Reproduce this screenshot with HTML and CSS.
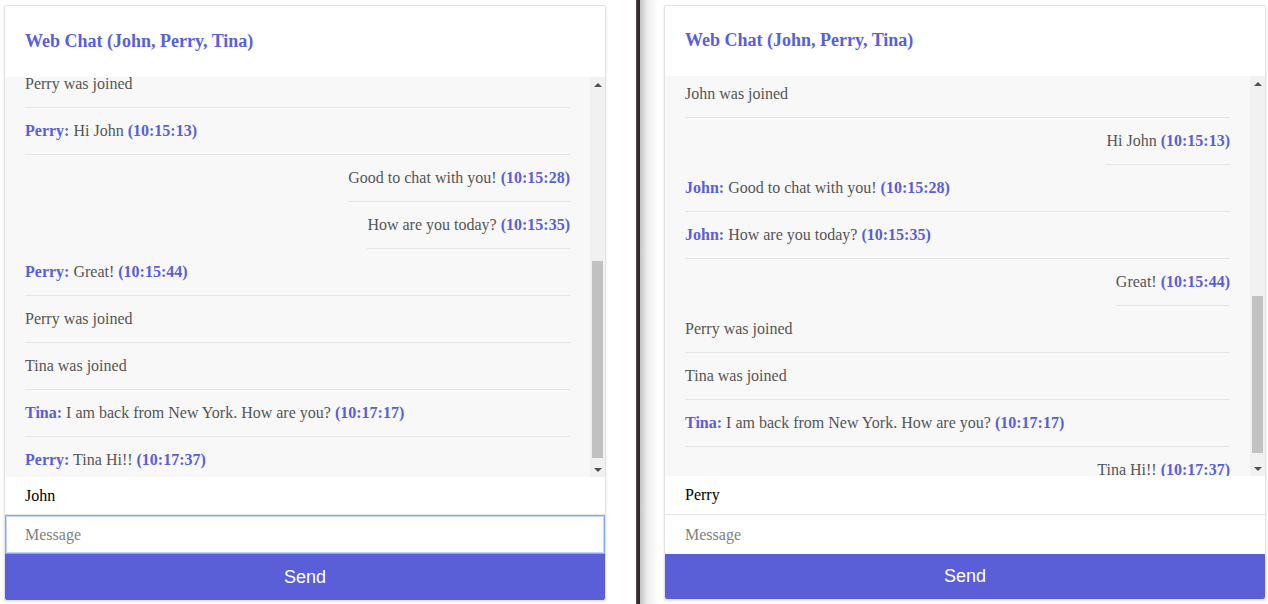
FILE: index.html
```html
<!DOCTYPE html>
<html lang="en">
<head>
    <meta charset="UTF-8">
    <meta name="viewport" content="width=device-width, initial-scale=1.0">
    <title>Web Chat</title>
    <link rel="stylesheet" href="styles.css">
</head>
<body>
    <div class="screen">
        <div class="pane">
            <div class="chat">
                <header class="chat-header">
                    <h1>Web Chat (John, Perry, Tina)</h1>
                </header>
                <div class="history">
                    <ul class="messages" data-scroll="345">
                        <li class="msg">John was joined</li>
                        <li class="msg">Perry was joined</li>
                        <li class="msg"><b class="who">Perry:</b> Hello? <b class="time">(10:12:41)</b></li>
                        <li class="msg own">Hi Perry <b class="time">(10:12:58)</b></li>
                        <li class="msg">Tina was joined</li>
                        <li class="msg">John was joined</li>
                        <li class="msg">John was joined</li>
                        <li class="msg">Perry was joined</li>
                        <li class="msg"><b class="who">Perry:</b> Hi John <b class="time">(10:15:13)</b></li>
                        <li class="msg own">Good to chat with you! <b class="time">(10:15:28)</b></li>
                        <li class="msg own">How are you today? <b class="time">(10:15:35)</b></li>
                        <li class="msg"><b class="who">Perry:</b> Great! <b class="time">(10:15:44)</b></li>
                        <li class="msg">Perry was joined</li>
                        <li class="msg">Tina was joined</li>
                        <li class="msg"><b class="who">Tina:</b> I am back from New York. How are you? <b class="time">(10:17:17)</b></li>
                        <li class="msg"><b class="who">Perry:</b> Tina Hi!! <b class="time">(10:17:37)</b></li>
                    </ul>
                    <div class="scrollbar">
                        <span class="arrow up"></span>
                        <div class="track">
                            <div class="thumb" style="margin-top: 169px; height: 197px;"></div>
                        </div>
                        <span class="arrow down"></span>
                    </div>
                </div>
                <input class="field name" type="text" value="John">
                <input class="field message focused" type="text" placeholder="Message">
                <button class="send">Send</button>
            </div>
        </div>
        <div class="divider"></div>
        <div class="pane pane-right">
            <div class="chat chat-right">
                <header class="chat-header">
                    <h1>Web Chat (John, Perry, Tina)</h1>
                </header>
                <div class="history">
                    <ul class="messages" data-scroll="522">
                        <li class="msg">Perry was joined</li>
                        <li class="msg">John was joined</li>
                        <li class="msg"><b class="who">John:</b> Anyone here? <b class="time">(10:11:02)</b></li>
                        <li class="msg">Perry was joined</li>
                        <li class="msg own">Hello? <b class="time">(10:12:41)</b></li>
                        <li class="msg"><b class="who">John:</b> Hi Perry <b class="time">(10:12:58)</b></li>
                        <li class="msg">Tina was joined</li>
                        <li class="msg">Perry was joined</li>
                        <li class="msg">John was joined</li>
                        <li class="msg">Perry was joined</li>
                        <li class="msg">Perry was joined</li>
                        <li class="msg">John was joined</li>
                        <li class="msg own">Hi John <b class="time">(10:15:13)</b></li>
                        <li class="msg"><b class="who">John:</b> Good to chat with you! <b class="time">(10:15:28)</b></li>
                        <li class="msg"><b class="who">John:</b> How are you today? <b class="time">(10:15:35)</b></li>
                        <li class="msg own">Great! <b class="time">(10:15:44)</b></li>
                        <li class="msg">Perry was joined</li>
                        <li class="msg">Tina was joined</li>
                        <li class="msg"><b class="who">Tina:</b> I am back from New York. How are you? <b class="time">(10:17:17)</b></li>
                        <li class="msg own">Tina Hi!! <b class="time">(10:17:37)</b></li>
                    </ul>
                    <div class="scrollbar">
                        <span class="arrow up"></span>
                        <div class="track">
                            <div class="thumb" style="margin-top: 205px; height: 157px;"></div>
                        </div>
                        <span class="arrow down"></span>
                    </div>
                </div>
                <input class="field name" type="text" value="Perry">
                <input class="field message" type="text" placeholder="Message">
                <button class="send">Send</button>
            </div>
        </div>
    </div>
    <script>
        document.querySelectorAll('.messages').forEach(function (list) {
            list.scrollTop = Number(list.dataset.scroll);
        });
    </script>
</body>
</html>
```

FILE: styles.css
```css
:root {
    --accent: #5a5fd7;
    --text: #555555;
    --line: #e6e6e6;
    --list-bg: #f8f8f8;
}
body {
    margin: 0;
    font-family: 'Liberation Serif', 'Times New Roman', serif;
    background: #ffffff;
}
.screen {
    display: flex;
    height: 604px;
    overflow: hidden;
}
.pane {
    width: 636px;
    padding: 5px 0 0 4px;
    box-sizing: border-box;
    background: #ffffff;
}
.pane-right {
    flex: 1;
    width: auto;
    padding-left: 24px;
    background: linear-gradient(to right, #c4c4c4 0, #ececec 7px, #ffffff 18px);
}
.divider {
    width: 4px;
    background: linear-gradient(to right, #6a6a6a 0, #2e2e2e 1px, #4d2a2e 2px, #2a2a2a 3px);
}
.chat {
    width: 602px;
    box-sizing: border-box;
    border: 1px solid #e2e2e2;
    border-radius: 2px;
    box-shadow: 0 1px 3px rgba(0, 0, 0, 0.1);
    background: #ffffff;
    display: flex;
    flex-direction: column;
}
.chat-header {
    box-sizing: border-box;
    height: 71px;
    display: flex;
    align-items: center;
    padding: 0 20px;
}
.chat-right .chat-header {
    height: 70px;
    padding-bottom: 2px;
}
.chat-header h1 {
    margin: 0;
    font-size: 18px;
    font-weight: bold;
    color: var(--accent);
}
.history {
    display: flex;
    height: 400px;
    background: var(--list-bg);
}
.messages {
    flex: 1;
    margin: 0;
    padding: 0 20px;
    list-style: none;
    overflow: hidden;
}
.msg {
    padding: 12px 0;
    line-height: 22px;
    font-size: 16px;
    color: var(--text);
    border-bottom: 1px solid var(--line);
    white-space: nowrap;
}
.msg.own {
    width: fit-content;
    margin-left: auto;
}
.who,
.time {
    color: var(--accent);
}
.scrollbar {
    width: 15px;
    display: flex;
    flex-direction: column;
    background: #f1f1f1;
}
.arrow {
    height: 15px;
    display: flex;
    align-items: center;
    justify-content: center;
}
.arrow::before {
    content: '';
    border-left: 4px solid transparent;
    border-right: 4px solid transparent;
}
.arrow.up::before {
    border-bottom: 4px solid #505050;
}
.arrow.down::before {
    border-top: 4px solid #505050;
}
.track {
    flex: 1;
    padding: 0 2px;
}
.thumb {
    background: #c1c1c1;
}
.field {
    display: block;
    width: 100%;
    box-sizing: border-box;
    height: 38px;
    margin: 0;
    padding: 0 20px;
    border: 0;
    border-bottom: 1px solid var(--line);
    font-family: 'Liberation Serif', 'Times New Roman', serif;
    font-size: 16px;
    color: #000000;
    background: #ffffff;
    outline: none;
}
.chat-right .field.name {
    height: 39px;
}
.field.message {
    height: 39px;
    border-bottom: 0;
}
.field::placeholder {
    color: #808080;
}
.field.focused {
    box-shadow: inset 0 0 0 1px #86abf4, inset 0 0 0 2px #c3d5fa;
}
.send {
    height: 46px;
    border: 0;
    border-radius: 0 0 2px 2px;
    background: var(--accent);
    color: #ffffff;
    font-family: 'Liberation Sans', Arial, sans-serif;
    font-size: 18px;
    cursor: pointer;
}
.chat-right .send {
    height: 45px;
}
```
